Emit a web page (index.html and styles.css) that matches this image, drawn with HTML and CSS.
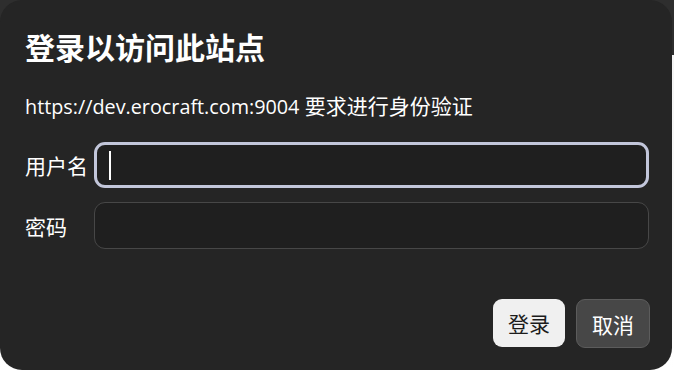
FILE: index.html
```html
<!DOCTYPE html>
<html lang="zh-CN">
<head>
<meta charset="utf-8">
<link rel="stylesheet" href="styles.css">
</head>
<body>
<div class="dialog">
  <h1 class="title">登录以访问此站点</h1>
  <p class="desc"><span class="host">https://dev.erocraft.com:9004</span> <span class="cjk">要求进行身份验证</span></p>
  <div class="form">
    <label class="label">用户名</label>
    <div class="input focused"><span class="caret"></span></div>
    <label class="label">密码</label>
    <div class="input"></div>
  </div>
  <div class="actions">
    <button class="btn primary">登录</button>
    <button class="btn secondary">取消</button>
  </div>
</div>
</body>
</html>
```

FILE: styles.css
```css
html, body {
  margin: 0;
  padding: 0;
}
body {
  width: 674px;
  height: 370px;
  overflow: hidden;
  background: linear-gradient(to bottom, #2e2e2e 0, #2e2e2e 55px, #f4f4f4 55px, #ffffff 100%);
  font-family: "Open Sans", "Noto Sans CJK SC", sans-serif;
  color: #ffffff;
}
.dialog {
  box-sizing: border-box;
  width: 672px;
  height: 370px;
  background: #252525;
  border-radius: 22px;
  padding: 25px 22px 0 25px;
  display: flex;
  flex-direction: column;
}
.title {
  margin: 0;
  font-family: "Noto Sans CJK SC", sans-serif;
  font-size: 30px;
  font-weight: 700;
  line-height: 42px;
}
.desc {
  margin: 24px 0 0;
  font-size: 20px;
  line-height: 28px;
  white-space: nowrap;
}
.host {
  font-size: 19.8px;
}
.cjk {
  font-family: "Noto Sans CJK SC", sans-serif;
  font-size: 21px;
}
.form {
  margin-top: 21px;
  display: grid;
  grid-template-columns: 69px 555px;
  row-gap: 14px;
  align-items: center;
}
.label {
  font-family: "Noto Sans CJK SC", sans-serif;
  font-size: 21px;
  line-height: 28px;
}
.input {
  box-sizing: border-box;
  height: 47px;
  border: 1px solid #474747;
  border-radius: 11px;
  background: #1f1f1f;
  display: flex;
  align-items: center;
  padding-left: 12px;
}
.input.focused {
  height: 46px;
  border: 3px solid #c2c6da;
  padding-left: 12px;
}
.caret {
  width: 1.5px;
  height: 29px;
  background: #ffffff;
}
.actions {
  margin-top: 50px;
  display: flex;
  justify-content: flex-end;
  gap: 11px;
}
.btn {
  box-sizing: border-box;
  height: 48px;
  border-radius: 9px;
  font-family: "Noto Sans CJK SC", sans-serif;
  font-size: 21px;
  padding: 0 14px;
}
.primary {
  width: 72px;
  background: #f0f0f0;
  color: #1c1c1c;
  border: none;
}
.secondary {
  width: 74px;
  height: 49px;
  background: #474747;
  color: #ffffff;
  border: 1px solid #5c5c5c;
}
```
